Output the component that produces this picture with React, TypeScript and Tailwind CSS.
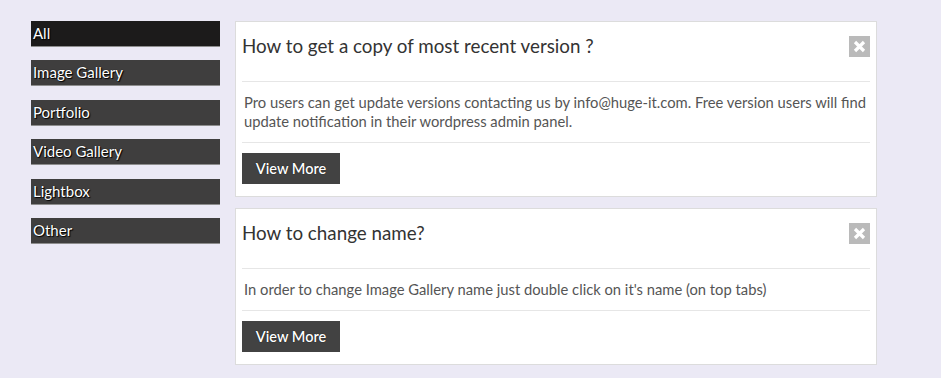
import { useState } from "react";

const categories = ["All", "Image Gallery", "Portfolio", "Video Gallery", "Lightbox", "Other"];

const faqs = [
  {
    q: "How to get a copy of most recent version ?",
    a: "Pro users can get update versions contacting us by info@huge-it.com. Free version users will find update notification in their wordpress admin panel.",
  },
  {
    q: "How to change name?",
    a: "In order to change Image Gallery name just double click on it's name (on top tabs)",
  },
];

function CloseBox() {
  return (
    <button className="mt-[2px] flex h-[21px] w-[21px] shrink-0 items-center justify-center bg-[#bababa]">
      <svg width="13" height="13" viewBox="0 0 13 13">
        <path d="M2 2 L11 11 M11 2 L2 11" stroke="#fff" strokeWidth="3.2" />
      </svg>
    </button>
  );
}

export default function App() {
  const [active, setActive] = useState("All");
  return (
    <div className="flex min-h-[378px] gap-[15px] bg-[#ebe9f5] pl-[31px] pt-[21px] font-['Lato','Open_Sans',sans-serif]">
      <div className="flex w-[189px] shrink-0 flex-col gap-[13.4px]">
        {categories.map((c) => (
          <div
            key={c}
            onClick={() => setActive(c)}
            className={
              "h-[26px] cursor-pointer border-b border-[#8d8d8d] pl-[2px] text-[15px] leading-[25px] text-white [text-shadow:1px_1px_1px_#000,0_0_1px_#000] " +
              (active === c ? "bg-[#1c1b1b]" : "bg-[#3f3e3e]")
            }
          >
            {c}
          </div>
        ))}
      </div>

      <div className="flex w-[642px] flex-col gap-[11px]">
        {faqs.map((f) => (
          <div key={f.q} className="border border-[#dcdcdc] bg-white px-[6px]">
            <div className="flex h-[59px] items-start justify-between pt-[12px]">
              <h2 className="text-[18.8px] leading-[24px] text-[#333]">{f.q}</h2>
              <CloseBox />
            </div>
            <div className="border-t border-[#e6e6e6] px-[2px] py-[11px] text-[14.75px] leading-[19px] text-[#555]">
              {f.a}
            </div>
            <div className="border-t border-[#e6e6e6] pb-[12px] pt-[10px]">
              <button className="h-[31px] w-[98px] bg-[#424242] text-[14.5px] font-semibold text-white [text-shadow:0_0_1px_#000]">
                View More
              </button>
            </div>
          </div>
        ))}
      </div>
    </div>
  );
}
